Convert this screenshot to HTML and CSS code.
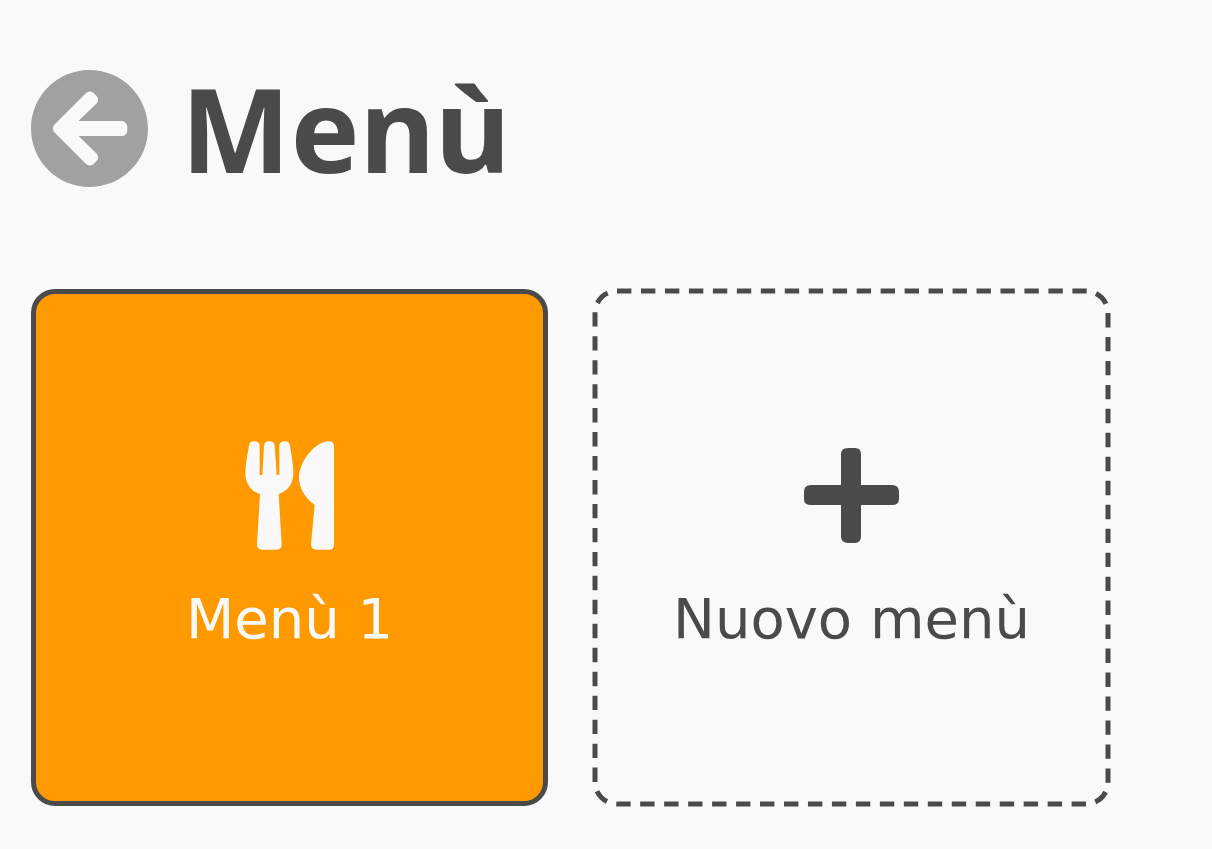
FILE: index.html
```html
<!DOCTYPE html>
<html lang="it">
<head>
<meta charset="utf-8">
<meta name="viewport" content="width=device-width, initial-scale=1">
<title>Menù</title>
<link rel="stylesheet" href="styles.css">
</head>
<body>
<header class="page-header">
  <button class="back" type="button" aria-label="Indietro">
    <svg class="back-icon" viewBox="8 8 496 496" aria-hidden="true"><path d="M256 504C119 504 8 393 8 256S119 8 256 8s248 111 248 248-111 248-248 248zm28.9-143.6L209.4 288H392c13.3 0 24-10.7 24-24v-16c0-13.3-10.7-24-24-24H209.4l75.5-72.4c9.7-9.3 9.9-24.8.4-34.3l-11-10.9c-9.4-9.4-24.6-9.4-33.9 0L107.7 239c-9.4 9.4-9.4 24.6 0 33.9l132.7 132.7c9.4 9.4 24.6 9.4 33.9 0l11-10.9c9.5-9.5 9.3-25-.4-34.3z"/></svg>
  </button>
  <h1 class="title">Menù</h1>
</header>
<main class="cards">
  <button class="card card-menu" type="button">
    <svg class="card-icon" viewBox="192 33 268 327" aria-hidden="true"><path d="M204 47Q206 34 219 34Q236 34 236 48V135H244L249 47Q250 34 265 34Q280 34 281 47L287 135H295V48Q295 34 312 34Q325 34 327 47Q337 105 337 128C337 160 320 184 293 192L302 343Q302 359 287 359H243Q228 359 228 343L237 192C210 184 193 160 193 128Q193 105 204 47ZM459 49V344Q459 359 444 359H406Q390 359 390 343L401 225C370 201 354 172 354 143C354 96 402 34 444 34Q459 34 459 49Z"/></svg>
    <span class="card-label">Menù 1</span>
  </button>
  <button class="card card-new" type="button">
    <svg class="card-outline" aria-hidden="true"><rect class="card-outline-line" pathLength="420"/></svg>
    <svg class="card-icon" viewBox="0 0 95 109" aria-hidden="true"><path d="M44 7h7q6 0 6 6v31h31q7 0 7 7v7q0 6-7 6H57v31q0 7-6 7h-7q-7 0-7-7V64H7q-7 0-7-6v-7q0-7 7-7h30V13q0-6 7-6z"/></svg>
    <span class="card-label">Nuovo menù</span>
  </button>
</main>
</body>
</html>
```
FILE: styles.css
```css
* {
  box-sizing: border-box;
}

body {
  margin: 0;
  padding: 48px 31px 42px;
  background: #f9f9f9;
  color: #4a4a4a;
}

.page-header {
  display: flex;
  align-items: center;
  gap: 33px;
  margin-bottom: 81px;
}

.back {
  display: flex;
  padding: 0;
  border: 0;
  background: none;
  color: #a1a1a1;
  cursor: pointer;
}

.back-icon {
  width: 117px;
  height: 117px;
  fill: currentColor;
}

.title {
  margin: 0;
  font: 700 116px/160px "Noto Sans", sans-serif;
}

.cards {
  display: grid;
  grid-template-columns: repeat(auto-fill, minmax(min(100%, 517px), 517px));
  gap: 45px;
}

.card {
  position: relative;
  display: flex;
  flex-direction: column;
  align-items: center;
  justify-content: center;
  gap: 37px;
  aspect-ratio: 1;
  padding: 0 0 4px;
  border: 5px solid #4a4a4a;
  border-radius: 24px;
  background: transparent;
  color: #4a4a4a;
  cursor: pointer;
}

.card-menu {
  background: #ff9900;
  color: #f9f9f9;
}

.card-new {
  border-color: transparent;
}

/* Dashed outline, drawn over the transparent border */
.card-outline {
  position: absolute;
  inset: -5px;
  width: calc(100% + 10px);
  height: calc(100% + 10px);
  overflow: visible;
}

.card-outline-line {
  x: 2px;
  y: 2px;
  width: calc(100% - 4px);
  height: calc(100% - 4px);
  rx: 22px;
  fill: none;
  stroke: currentColor;
  stroke-width: 5px;
  stroke-dasharray: 3 2;
}

.card-icon {
  height: 109px;
  fill: currentColor;
}

.card-label {
  font: 400 56px/64px "DejaVu Sans", sans-serif;
}
```
